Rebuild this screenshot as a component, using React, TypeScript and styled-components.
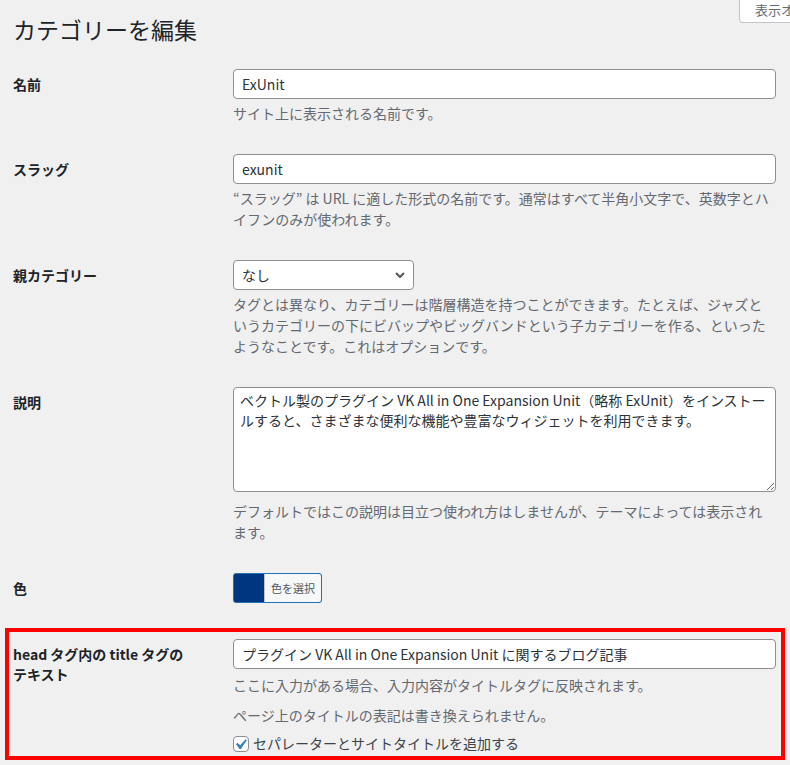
import React from 'react';
import styled, { createGlobalStyle, css } from 'styled-components';

const GlobalStyle = createGlobalStyle`
  html, body {
    margin: 0;
    padding: 0;
    background: #f0f0f1;
  }

  body {
    font-family: "Noto Sans CJK JP", "Noto Sans", sans-serif;
    font-size: 14px;
    color: #3c434a;
  }

  *, *::before, *::after {
    box-sizing: border-box;
  }
`;

const Page = styled.div`
  width: 790px;
  min-height: 765px;
  overflow: hidden;
`;

const Header = styled.header`
  display: flex;
  align-items: flex-start;
  height: 44px;
`;

const Title = styled.h1`
  flex: 1;
  margin: 14px 0 0 13px;
  font-size: 23px;
  font-weight: 400;
  line-height: 30px;
  color: #1d2327;
`;

const TabSlot = styled.div`
  flex: 0 0 51px;
  width: 51px;
  min-width: 0;
`;

const ScreenOptions = styled.button`
  display: block;
  height: 23px;
  margin: 0;
  padding: 0 6px 2px 15px;
  white-space: nowrap;
  border: 1px solid #c3c4c7;
  border-top: none;
  border-radius: 0 0 0 4px;
  background: #fff;
  color: #646970;
  font-family: inherit;
  font-size: 13px;
  line-height: 20px;
`;

const Form = styled.form`
  display: flex;
  flex-direction: column;
  margin-top: 10px;
`;

const Row = styled.div<{ $highlight?: boolean }>`
  display: grid;
  grid-template-columns: 200px 1fr;
  column-gap: 20px;
  padding: 15px 14px 15px 13px;

  ${(p) =>
    p.$highlight &&
    css`
      margin: 10px 5px 0;
      padding: 7px 5px 2px 4px;
      border: 4px solid #ff0000;
    `}
`;

const Label = styled.label`
  padding-top: 5px;
  font-weight: 700;
  line-height: 20px;
  color: #1d2327;
`;

const Field = styled.div`
  min-width: 0;
`;

const TextInput = styled.input`
  display: block;
  width: 100%;
  height: 30px;
  margin: 0;
  padding: 0 8px;
  border: 1px solid #8c8f94;
  border-radius: 4px;
  background: #fff;
  color: #2c3338;
  font-family: inherit;
  font-size: 14px;
`;

const SelectWrap = styled.div`
  position: relative;
  width: 181px;
`;

const Select = styled.select`
  display: block;
  width: 100%;
  height: 30px;
  margin: 0;
  padding: 0 24px 0 8px;
  appearance: none;
  border: 1px solid #8c8f94;
  border-radius: 4px;
  background: #fff;
  color: #2c3338;
  font-family: inherit;
  font-size: 14px;
`;

const Chevron = styled.svg`
  position: absolute;
  top: 12px;
  right: 9px;
  pointer-events: none;
`;

const TextArea = styled.textarea`
  display: block;
  width: 100%;
  height: 105px;
  margin: 0;
  padding: 2px 6px;
  border: 1px solid #8c8f94;
  border-radius: 4px;
  background: #fff;
  color: #2c3338;
  font-family: inherit;
  font-size: 14px;
  line-height: 20px;
  resize: vertical;
`;

const Description = styled.p<{ $gap?: number }>`
  margin: ${(p) => p.$gap ?? 4}px 0 0;
  line-height: 21px;
  color: #646970;
`;

const ColorButton = styled.button<{ $swatch: string }>`
  display: inline-flex;
  height: 30px;
  margin: 0;
  padding: 0 0 0 30px;
  border: 1px solid #2271b1;
  border-radius: 3px;
  background: ${(p) => p.$swatch};
  font-family: inherit;
  cursor: pointer;
`;

const ColorText = styled.span`
  display: block;
  padding: 0 6px;
  border-left: 1px solid #c3c4c7;
  border-radius: 0 2px 2px 0;
  background: #f6f7f7;
  color: #50575e;
  font-size: 11px;
  line-height: 28px;
`;

const CheckRow = styled.label`
  display: flex;
  align-items: center;
  margin-top: 7px;
  line-height: 21px;
  color: #3c434a;
`;

const CheckBox = styled.span`
  display: block;
  flex: 0 0 16px;
  width: 16px;
  height: 16px;
  margin-right: 4px;
  border: 1px solid #8c8f94;
  border-radius: 4px;
  background: #fff;

  svg {
    display: block;
    margin: -3px 0 0 -4px;
  }
`;

export default function App() {
  return (
    <Page>
      <GlobalStyle />
      <Header>
        <Title>カテゴリーを編集</Title>
        <TabSlot>
          <ScreenOptions type="button">表示オプション ▼</ScreenOptions>
        </TabSlot>
      </Header>

      <Form onSubmit={(e) => e.preventDefault()}>
        <Row>
          <Label htmlFor="name">名前</Label>
          <Field>
            <TextInput id="name" defaultValue="ExUnit" />
            <Description>サイト上に表示される名前です。</Description>
          </Field>
        </Row>

        <Row>
          <Label htmlFor="slug">スラッグ</Label>
          <Field>
            <TextInput id="slug" defaultValue="exunit" />
            <Description>
              “スラッグ” は URL に適した形式の名前です。通常はすべて半角小文字で、英数字とハイフンのみが使われます。
            </Description>
          </Field>
        </Row>

        <Row>
          <Label htmlFor="parent">親カテゴリー</Label>
          <Field>
            <SelectWrap>
              <Select id="parent" defaultValue="none">
                <option value="none">なし</option>
              </Select>
              <Chevron width="10" height="6" viewBox="0 0 10 6">
                <path d="M1 1l4 4 4-4" fill="none" stroke="#50575e" strokeWidth="2" />
              </Chevron>
            </SelectWrap>
            <Description>
              タグとは異なり、カテゴリーは階層構造を持つことができます。たとえば、ジャズというカテゴリーの下にビバップやビッグバンドという子カテゴリーを作る、といったようなことです。これはオプションです。
            </Description>
          </Field>
        </Row>

        <Row>
          <Label htmlFor="description">説明</Label>
          <Field>
            <TextArea
              id="description"
              defaultValue="ベクトル製のプラグイン VK All in One Expansion Unit（略称 ExUnit）をインストールすると、さまざまな便利な機能や豊富なウィジェットを利用できます。"
            />
            <Description $gap={9}>
              デフォルトではこの説明は目立つ使われ方はしませんが、テーマによっては表示されます。
            </Description>
          </Field>
        </Row>

        <Row>
          <Label>色</Label>
          <Field>
            <ColorButton type="button" $swatch="#00357f">
              <ColorText>色を選択</ColorText>
            </ColorButton>
          </Field>
        </Row>

        <Row $highlight>
          <Label htmlFor="head-title">
            head タグ内の title タグの
            <br />
            テキスト
          </Label>
          <Field>
            <TextInput id="head-title" defaultValue="プラグイン VK All in One Expansion Unit に関するブログ記事" />
            <Description $gap={6}>ここに入力がある場合、入力内容がタイトルタグに反映されます。</Description>
            <Description $gap={9}>ページ上のタイトルの表記は書き換えられません。</Description>
            <CheckRow>
              <CheckBox>
                <svg width="21" height="21" viewBox="0 0 20 20">
                  <path d="M14.83 4.89l1.34.94-5.81 8.38H9.02L5.78 9.67l1.34-1.25 2.57 2.4z" fill="#3582c4" />
                </svg>
              </CheckBox>
              セパレーターとサイトタイトルを追加する
            </CheckRow>
          </Field>
        </Row>
      </Form>
    </Page>
  );
}
